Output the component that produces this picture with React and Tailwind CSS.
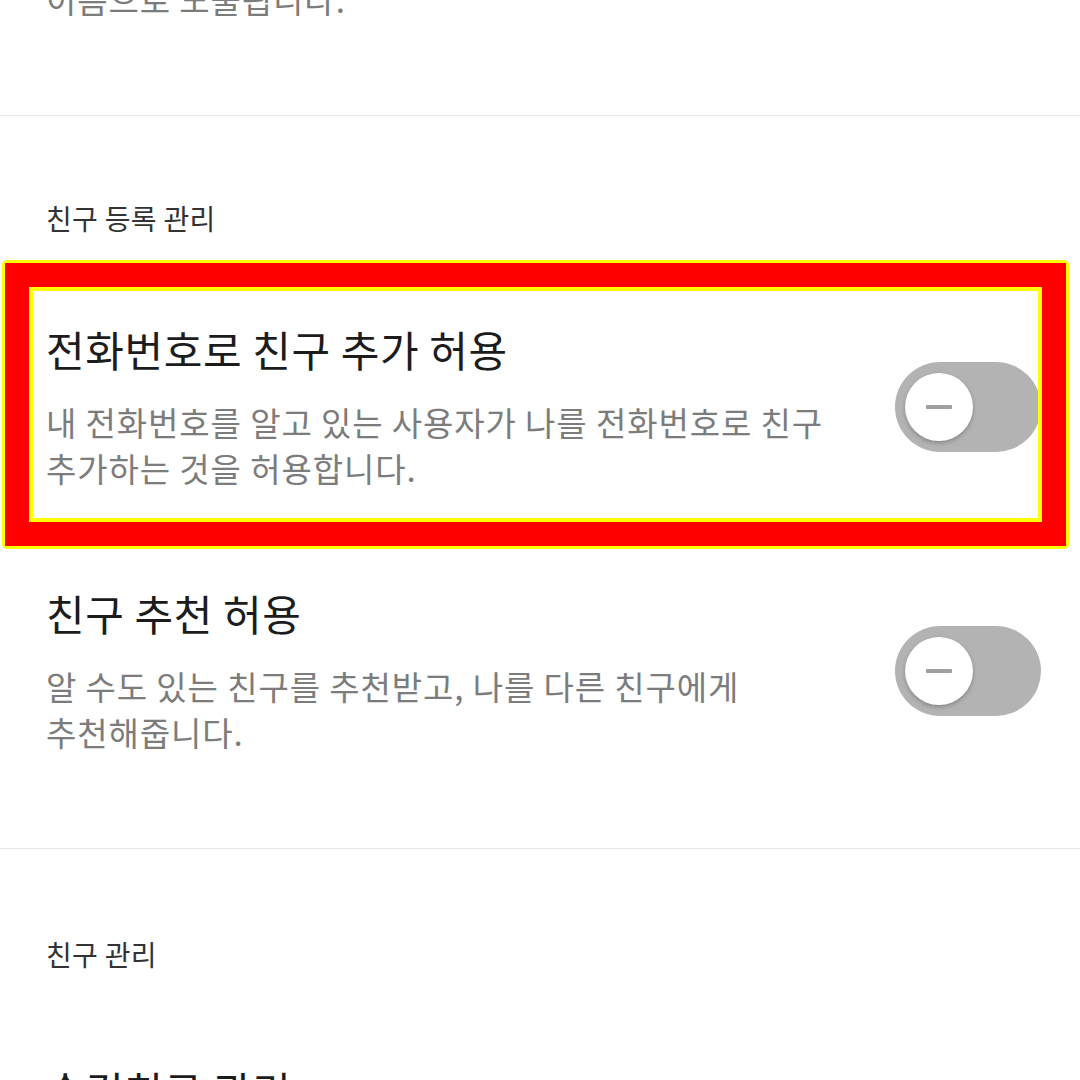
import React, { useState } from 'react';

const FONT = { fontFamily: '"Noto Sans CJK KR", "Noto Sans", sans-serif' };

function Toggle({ on, onChange }) {
  return (
    <button
      onClick={onChange}
      className="relative flex h-[90px] w-[146px] shrink-0 items-center rounded-full bg-[#b3b3b3] px-[10px]"
    >
      <span className="flex h-[68px] w-[68px] items-center justify-center rounded-full bg-white shadow-[0_2px_4px_rgba(0,0,0,0.25)]">
        <span className="h-[4px] w-[26px] rounded-[1px] bg-[#a0a0a0]" />
      </span>
    </button>
  );
}

function SettingRow({ title, desc, highlight }) {
  const [on, setOn] = useState(false);
  return (
    <div className="relative flex items-center pl-[46px] pr-[39px] pt-[47px] pb-[49px]">
      <div className="flex-1 pr-[40px]">
        <p className="text-[42px] leading-[52px] tracking-[0.6px] text-[#1c1c1c]">{title}</p>
        <p className="mt-[24px] break-keep text-[33px] leading-[46px] tracking-[0.9px] text-[#7c7c7c]">{desc}</p>
      </div>
      <Toggle on={on} onChange={() => setOn(!on)} />

      {/* annotation highlight over the row */}
      {highlight && (
        <div className="pointer-events-none absolute top-[-16px] bottom-[-9px] left-[2px] right-[11px] rounded-[5px] border-[3px] border-[#ffff00]">
          <div className="h-full border-[24px] border-[#ff0000]">
            <div className="h-full border-[4px] border-[#ffff00]" />
          </div>
        </div>
      )}
    </div>
  );
}

function SectionHeader({ children, top = 'pt-[84px]' }) {
  return (
    <div className={`pl-[46px] pb-[40px] ${top}`}>
      <p className="text-[28px] leading-[36px] tracking-[0.3px] text-[#333333]">{children}</p>
    </div>
  );
}

export default function App() {
  return (
    <div className="h-[1080px] w-[1080px] overflow-hidden bg-white" style={FONT}>
      {/* previous section tail */}
      <div className="mt-[-24px] pl-[46px] pb-[93px]">
        <p className="text-[33px] leading-[46px] tracking-[0.9px] text-[#7c7c7c]">이름으로 노출됩니다.</p>
      </div>
      <div className="h-px bg-[#e6e6e6]" />

      {/* 친구 등록 관리 */}
      <div className="pb-[44px]">
        <SectionHeader>친구 등록 관리</SectionHeader>
        <SettingRow
          highlight
          title="전화번호로 친구 추가 허용"
          desc="내 전화번호를 알고 있는 사용자가 나를 전화번호로 친구 추가하는 것을 허용합니다."
        />
        <SettingRow
          title="친구 추천 허용"
          desc="알 수도 있는 친구를 추천받고, 나를 다른 친구에게 추천해줍니다."
        />
      </div>
      <div className="h-px bg-[#e6e6e6]" />

      {/* 친구 관리 */}
      <SectionHeader top="pt-[87px]">친구 관리</SectionHeader>
      <div className="pl-[46px] pt-[52px]">
        <p className="text-[42px] leading-[52px] tracking-[0.6px] text-[#1c1c1c]">숨김친구 관리</p>
      </div>
    </div>
  );
}
